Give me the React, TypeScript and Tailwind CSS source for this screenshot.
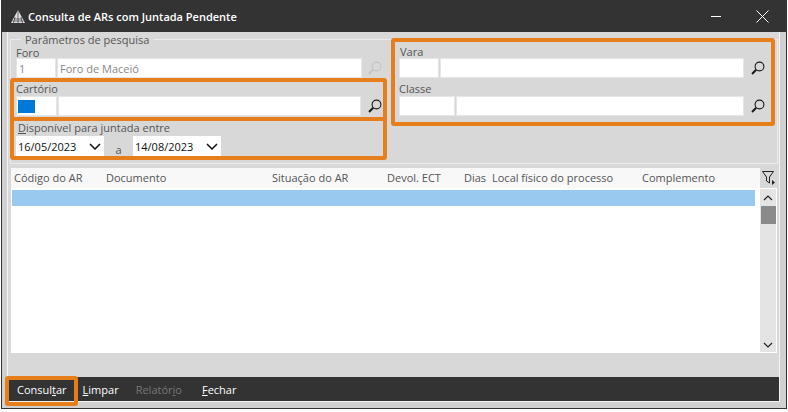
function Lupa({ off }: { off?: boolean }) {
  const cor = off ? '#c4c4c4' : '#1a1a1a';
  return (
    <svg width="14" height="14" viewBox="0 0 14 14" fill="none" stroke={cor}>
      <circle cx="8.5" cy="5.5" r="4.4" strokeWidth="1.1" />
      <path d="M5.2 8.8 L1 13" strokeWidth="2" />
    </svg>
  );
}

function Campo({ className, children }: { className: string; children?: React.ReactNode }) {
  return <div className={`h-5 bg-white border border-[#e6e6e6] flex items-center ${className}`}>{children}</div>;
}

function Chevron() {
  return (
    <svg width="12" height="7" viewBox="0 0 12 7" fill="none" stroke="#111" strokeWidth="1.5">
      <path d="M1 1 L6 6 L11 1" />
    </svg>
  );
}

function Data({ valor }: { valor: string }) {
  return (
    <div className="w-[88px] h-5 bg-white flex items-center justify-between pl-[2px] pr-[3px] text-[#111]">
      <span>{valor}</span>
      <Chevron />
    </div>
  );
}

function Cabecalho({ w, children }: { w: string; children: string }) {
  return <div className={`shrink-0 ${w}`}>{children}</div>;
}

export default function App() {
  return (
    <div className="w-[788px] h-[412px] bg-white pl-px text-[11px] leading-none text-[#555] font-['Open_Sans','Noto_Sans',sans-serif]">
      <div className="w-[786px] h-[409px] border-x border-b border-[#333] bg-[#d0d0d0] flex flex-col">
        <div className="h-8 shrink-0 bg-[#333333] flex items-center pl-[8px] text-white">
          <svg width="16" height="15" viewBox="0 0 16 15" className="mr-[2px] mt-px">
            <path d="M8 1 L15 14 H1 Z" fill="#e2e2e2" />
            <path d="M8 1 V14 M5 8 L3.5 14 M11 8 L12.5 14 M4 10 H12 M2.5 12 H13.5" stroke="#333" strokeWidth="0.7" />
          </svg>
          <span className="font-semibold text-[11px]">Consulta de ARs com Juntada Pendente</span>
          <div className="ml-auto flex items-center">
            <div className="w-[10px] h-px bg-white mr-[35px]" />
            <svg width="13" height="13" viewBox="0 0 13 13" stroke="#fff" strokeWidth="1" className="mr-[17px]">
              <path d="M0.5 0.5 L12.5 12.5 M12.5 0.5 L0.5 12.5" />
            </svg>
          </div>
        </div>

        <div className="flex-1 flex flex-col ml-[5px] mr-[6px] mb-[6px] border-x border-b border-[#f4f4f4] bg-[#d8d8d8]">
          <div className="relative mt-[7px] ml-[2px] mr-px h-[125px] border border-[#ececec] flex items-start">
            <span className="absolute left-[10px] -top-[6px] bg-[#d8d8d8] px-[4px]">Parâmetros de pesquisa</span>

            <div className="w-[377px] -ml-px shrink-0 flex flex-col">
              <div className="h-[38px] pl-[6px] pt-[7px]">
                <div className="h-[11px]">Foro</div>
                <div className="flex items-center text-[#888]">
                  <Campo className="w-[40px] pl-[2px]">1</Campo>
                  <Campo className="w-[305px] ml-[1px] pl-[2px]">Foro de Maceió</Campo>
                  <div className="ml-[6px]"><Lupa off /></div>
                </div>
              </div>

              <div className="h-[43px] border-4 border-[#e67e1c] rounded-[3px] pl-[2px] pt-px">
                <div className="h-[12px]">Cartório</div>
                <div className="flex items-center mt-px">
                  <Campo className="w-[41px] pl-[1px]"><div className="w-[17px] h-[13px] bg-[#0078d7]" /></Campo>
                  <Campo className="w-[303px] ml-px" />
                  <div className="ml-[7px]"><Lupa /></div>
                </div>
              </div>

              <div className="h-[43px] -mt-[4px] border-4 border-[#e67e1c] rounded-[3px] pl-[2px] pt-px">
                <div className="h-[12px] pl-[2px]"><u>D</u>isponível para juntada entre</div>
                <div className="flex items-start mt-[2px]">
                  <Data valor="16/05/2023" />
                  <span className="w-[29px] text-center pt-[8px]">a</span>
                  <Data valor="14/08/2023" />
                </div>
              </div>
            </div>

            <div className="ml-[4px] -mt-[2px] w-[384px] h-[88px] border-4 border-[#e67e1c] rounded-[3px] pl-[4px] pt-[4px]">
              <div className="h-[12px] pl-px">Vara</div>
              <div className="flex items-center">
                <Campo className="w-[40px]" />
                <Campo className="w-[304px] ml-[1px]" />
                <div className="ml-[7px]"><Lupa /></div>
              </div>
              <div className="h-[12px] mt-[5px]">Classe</div>
              <div className="flex items-center mt-px">
                <Campo className="w-[56px]" />
                <Campo className="w-[288px] ml-[1px]" />
                <div className="ml-[7px]"><Lupa /></div>
              </div>
            </div>
          </div>

          <div className="mt-1 ml-[3px] mr-[2px] flex-1 flex flex-col min-h-0">
            <div className="h-5 flex shrink-0">
              <div className="flex-1 bg-[#f8f8f8] flex items-center pl-[3px] pb-px text-[#555] mr-[1px]">
                <Cabecalho w="w-[92px]">Código do AR</Cabecalho>
                <Cabecalho w="w-[166px]">Documento</Cabecalho>
                <Cabecalho w="w-[115px]">Situação do AR</Cabecalho>
                <Cabecalho w="w-[77px]">Devol. ECT</Cabecalho>
                <Cabecalho w="w-[28px]">Dias</Cabecalho>
                <Cabecalho w="w-[150px]">Local físico do processo</Cabecalho>
                <Cabecalho w="w-[90px]">Complemento</Cabecalho>
              </div>
              <div className="w-4 flex items-center justify-center">
                <svg width="14" height="16" viewBox="0 0 14 16" fill="none" stroke="#222" strokeWidth="1">
                  <path d="M0.5 1.5 H11.5 L7.5 7 V13 L4.5 11 V7 Z" />
                  <path d="M10 10 L13 12.5 L10 15 Z" fill="#222" stroke="none" />
                </svg>
              </div>
            </div>
            <div className="h-[165px] bg-white flex">
              <div className="flex-1 pt-[2px] pl-px pr-[5px]">
                <div className="h-4 bg-[#99c9ef]" />
              </div>
              <div className="w-4 bg-[#e4e4e4] flex flex-col items-center mt-px mb-[1px] pb-[4px] mr-px">
                <svg width="10" height="6" viewBox="0 0 10 6" fill="none" stroke="#222" strokeWidth="1.2" className="mt-[6px]">
                  <path d="M1 5 L5 1 L9 5" />
                </svg>
                <div className="w-[15px] h-[18px] bg-[#8a8a8a] mt-[5px]" />
                <svg width="10" height="6" viewBox="0 0 10 6" fill="none" stroke="#222" strokeWidth="1.2" className="mt-auto">
                  <path d="M1 1 L5 5 L9 1" />
                </svg>
              </div>
            </div>
            <div className="flex-1" />
          </div>

          <div className="relative h-6 shrink-0 bg-[#333333] flex items-center text-white">
            <span className="ml-[9px]">Consul<u>t</u>ar</span>
            <span className="ml-[16px]"><u>L</u>impar</span>
            <span className="ml-[17px] text-[#777]">Relatór<u>i</u>o</span>
            <span className="ml-[20px]"><u>F</u>echar</span>
            <div className="absolute left-[-3px] -top-px w-[73px] h-[30px] border-4 border-[#e67e1c] rounded-[3px]" />
          </div>
        </div>
      </div>
    </div>
  );
}
